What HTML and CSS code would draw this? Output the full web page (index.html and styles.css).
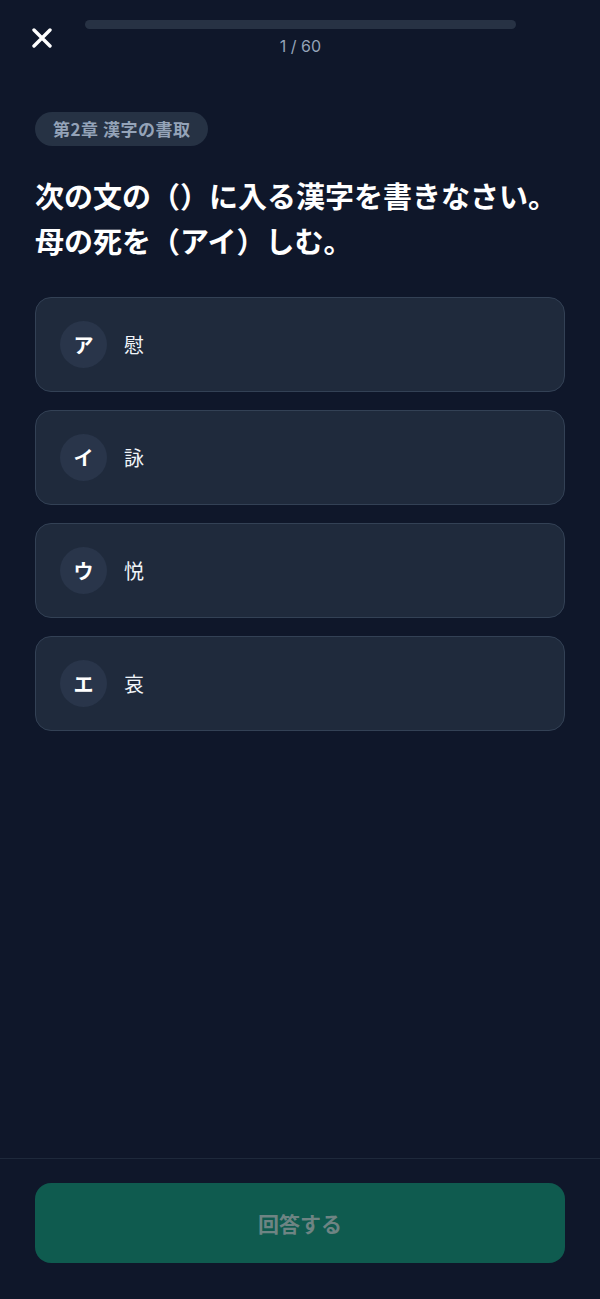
FILE: index.html
```html
<!DOCTYPE html>
<html lang="ja">
<head>
<meta charset="utf-8">
<meta name="viewport" content="width=device-width, initial-scale=1">
<title>Quiz</title>
<link rel="stylesheet" href="styles.css">
</head>
<body>
<div class="app">
  <header class="top">
    <button class="close" aria-label="閉じる">
      <svg width="20" height="20" viewBox="0 0 20 20"><path d="M2 2 L18 18 M18 2 L2 18" stroke="#ffffff" stroke-width="3.4" stroke-linecap="round"/></svg>
    </button>
    <div class="progress">
      <div class="bar"><div class="fill" style="width:0%"></div></div>
      <div class="count">1 / 60</div>
    </div>
  </header>
  <main class="main">
    <div class="chip">第2章 漢字の書取</div>
    <h1 class="question">次の文の（）に入る漢字を書きなさい。<br>母の死を（アイ）しむ。</h1>
    <div class="options">
      <div class="option"><span class="letter">ア</span><span class="text">慰</span></div>
      <div class="option"><span class="letter">イ</span><span class="text">詠</span></div>
      <div class="option"><span class="letter">ウ</span><span class="text">悦</span></div>
      <div class="option"><span class="letter">エ</span><span class="text">哀</span></div>
    </div>
  </main>
  <footer class="footer">
    <button class="submit" disabled>回答する</button>
  </footer>
</div>
</body>
</html>
```
FILE: styles.css
```css
* { box-sizing: border-box; }
html, body { margin: 0; padding: 0; }
body {
  background: #0f172a;
  color: #ffffff;
  font-family: "Noto Sans CJK JP", "Noto Sans", sans-serif;
  text-spacing-trim: space-all;
}
.app {
  min-height: 1299px;
  display: flex;
  flex-direction: column;
}
.top {
  display: flex;
  align-items: flex-start;
  padding: 20px 84px 0 32px;
}
.close {
  width: 20px;
  height: 20px;
  margin-top: 8px;
  padding: 0;
  border: 0;
  background: none;
  display: flex;
}
.progress {
  flex: 1;
  margin-left: 33px;
  display: flex;
  flex-direction: column;
  align-items: center;
}
.bar {
  width: 100%;
  height: 9px;
  border-radius: 5px;
  background: #273244;
  overflow: hidden;
}
.fill { height: 100%; background: #10b981; }
.count {
  margin-top: 6px;
  font-family: "Inter", "Noto Sans", sans-serif;
  font-size: 16px;
  line-height: 22px;
  color: #94a3b8;
}
.main {
  flex: 1;
  padding: 0 35px;
}
.chip {
  display: inline-block;
  margin-top: 55px;
  height: 34px;
  line-height: 34px;
  padding: 0 18px;
  border-radius: 17px;
  background: #263244;
  color: #94a3b8;
  font-size: 17px;
  font-weight: 700;
  letter-spacing: 0.5px;
}
.question {
  margin: 27px 0 0;
  font-size: 29px;
  line-height: 45px;
  font-weight: 700;
  color: #ffffff;
  letter-spacing: 0;
}
.options {
  margin-top: 34px;
  display: flex;
  flex-direction: column;
  gap: 18px;
}
.option {
  height: 95px;
  display: flex;
  align-items: center;
  padding: 0 24px;
  border: 1px solid #334155;
  border-radius: 16px;
  background: #1f2a3c;
}
.letter {
  width: 47px;
  height: 47px;
  border-radius: 50%;
  background: #29354a;
  display: flex;
  align-items: center;
  justify-content: center;
  font-size: 20px;
  font-weight: 700;
  color: #ffffff;
}
.text {
  margin-left: 17px;
  font-size: 20px;
  color: #f1f5f9;
}
.footer {
  border-top: 1px solid #1e293b;
  padding: 24px 35px 36px;
}
.submit {
  width: 100%;
  height: 80px;
  border: 0;
  border-radius: 16px;
  background: #0f5b4f;
  color: #6e8483;
  font-family: "Noto Sans CJK JP", "Noto Sans", sans-serif;
  font-size: 21px;
  font-weight: 700;
}
```
